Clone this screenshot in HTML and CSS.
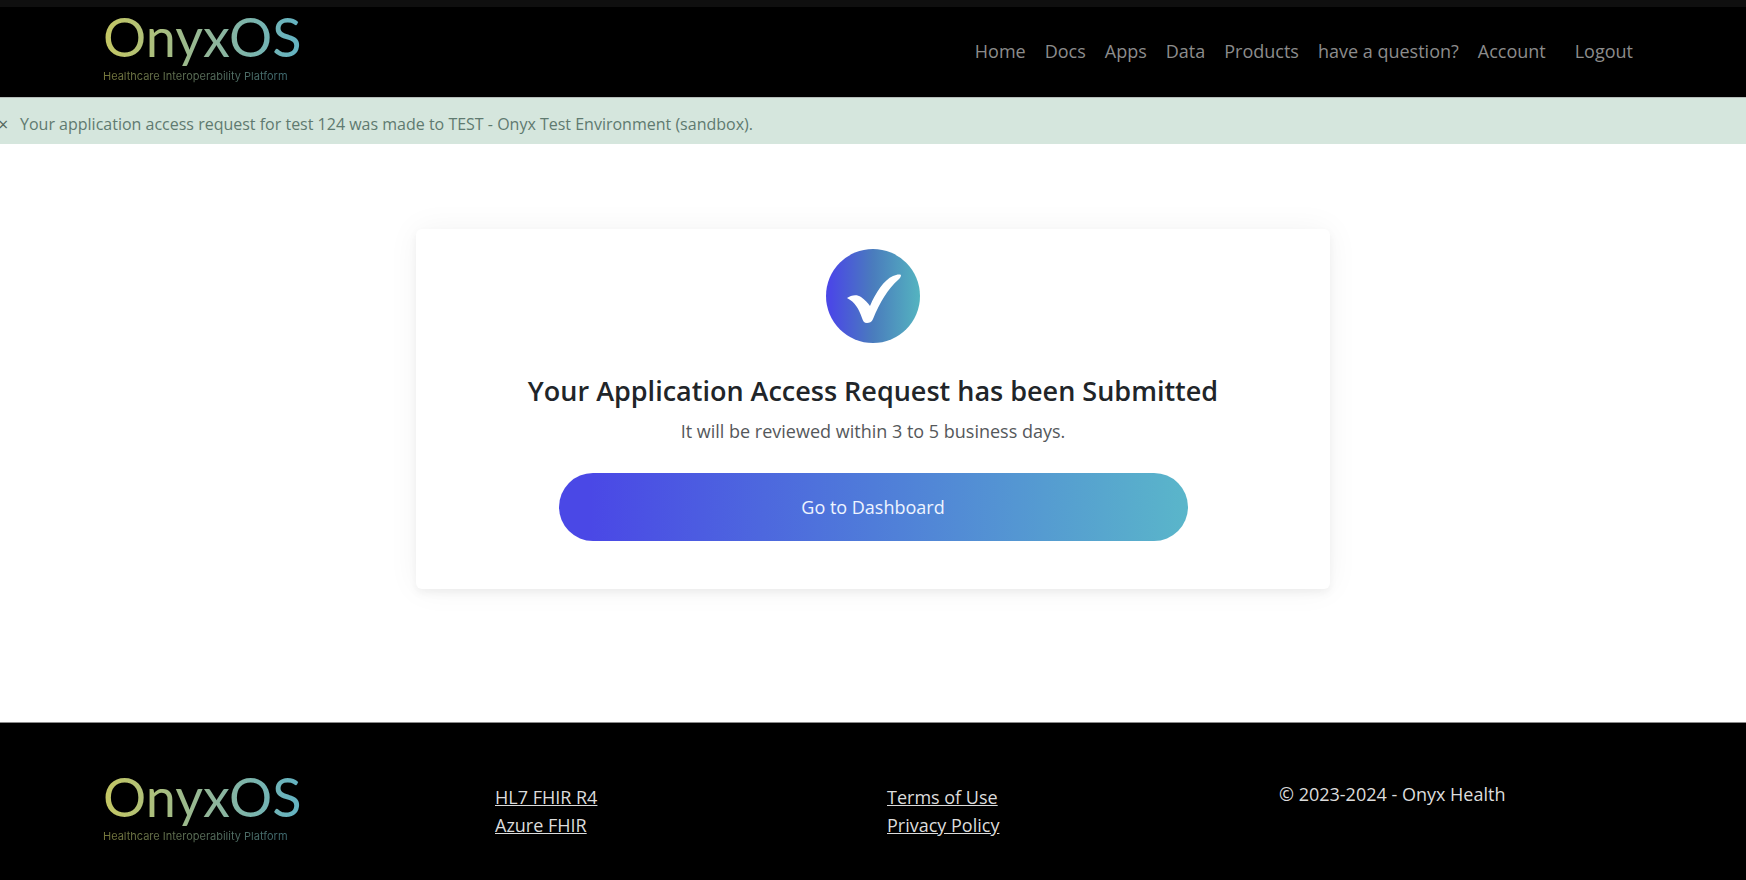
FILE: index.html
```html
<!DOCTYPE html>
<html lang="en">
<head>
    <meta charset="UTF-8">
    <meta name="viewport" content="width=device-width, initial-scale=1.0">
    <title>OnyxOS</title>
    <link rel="stylesheet" href="styles.css">
</head>
<body>
    <header class="header">
        <a href="#" class="logo">
            <span class="logo-name">OnyxOS</span>
            <span class="logo-tagline">Healthcare Interoperability Platform</span>
        </a>
        <nav class="nav">
            <a href="#">Home</a>
            <a href="#">Docs</a>
            <a href="#">Apps</a>
            <a href="#">Data</a>
            <a href="#">Products</a>
            <a href="#">have a question?</a>
            <a href="#">Account</a>
            <a href="#" class="nav-logout">Logout</a>
        </nav>
    </header>

    <div class="alert" role="alert">
        <button type="button" class="alert-close" aria-label="Close">×</button>
        <span>Your application access request for test 124 was made to TEST - Onyx Test Environment (sandbox).</span>
    </div>

    <main class="main">
        <div class="card">
            <svg class="check" viewBox="0 0 94 94" aria-hidden="true">
                <defs>
                    <linearGradient id="checkFill" x1="0" y1="0" x2="1" y2="0">
                        <stop offset="0.05" stop-color="#4a48e6"/>
                        <stop offset="0.5" stop-color="#4a7cbd"/>
                        <stop offset="1" stop-color="#54b4c0"/>
                    </linearGradient>
                </defs>
                <circle cx="47" cy="47" r="47" fill="url(#checkFill)"/>
                <path fill="#fff" d="M21 49C25 46 31 45 35 48C39 51 42 54 44 57C50 43 58 31 67 27C70 26 73 25 75 26C75 28 74 29 72 31C62 40 54 53 47 70C46 73 43 74 41 74C38 74 37 72 36 69C33 60 29 53 21 49Z"/>
            </svg>
            <h1>Your Application Access Request has been Submitted</h1>
            <p>It will be reviewed within 3 to 5 business days.</p>
            <button type="button" class="btn">Go to Dashboard</button>
        </div>
    </main>

    <footer class="footer">
        <div class="footer-col">
            <a href="#" class="logo">
                <span class="logo-name">OnyxOS</span>
                <span class="logo-tagline">Healthcare Interoperability Platform</span>
            </a>
        </div>
        <div class="footer-col footer-links">
            <a href="#">HL7 FHIR R4</a>
            <a href="#">Azure FHIR</a>
        </div>
        <div class="footer-col footer-links">
            <a href="#">Terms of Use</a>
            <a href="#">Privacy Policy</a>
        </div>
        <div class="footer-col footer-copy">© 2023-2024 - Onyx Health</div>
    </footer>
</body>
</html>
```
FILE: styles.css
```css
* {
    box-sizing: border-box;
}
body {
    display: flex;
    flex-direction: column;
    min-height: 100vh;
    margin: 0;
    background-color: #fff;
    color: #212529;
    font-family: "Open Sans", "Noto Sans", sans-serif;
    font-size: 18px;
    line-height: 28px;
}
button {
    font-family: inherit;
    border: none;
    cursor: pointer;
}
.header {
    display: flex;
    justify-content: space-between;
    align-items: flex-start;
    height: 97px;
    padding: 0 113px 0 103px;
    background-color: #000;
    border-top: 7px solid #0f0f0f;
}
.logo {
    display: inline-flex;
    flex-direction: column;
    text-decoration: none;
}
.logo-name,
.logo-tagline {
    background-image: linear-gradient(90deg, #c5c763, #8fb59a 55%, #62b3c4);
    -webkit-background-clip: text;
    background-clip: text;
    color: transparent;
}
.logo-name {
    font-family: Lato, sans-serif;
    font-size: 54px;
    line-height: 60px;
}
.logo-tagline {
    font-family: Inter, sans-serif;
    font-size: 11px;
    line-height: 18px;
    opacity: 0.6;
}
.nav {
    display: flex;
    gap: 19px;
    padding-top: 30px;
}
.nav a {
    color: #8c8c8c;
    text-decoration: none;
}
.nav-logout {
    margin-left: 10px;
}
.alert {
    display: flex;
    align-items: center;
    gap: 14px;
    height: 47px;
    padding-top: 6px;
    background-color: #d5e6dd;
    border-top: 1px solid #b5bcb9;
    color: #5f7a70;
    font-size: 16px;
}
.alert-close {
    width: 8px;
    margin-left: -2px;
    padding: 0;
    background: none;
    color: #52665e;
    font-size: 18px;
    line-height: 20px;
}
.main {
    flex: 1;
    padding: 85px 16px 0;
}
.card {
    display: flex;
    flex-direction: column;
    align-items: center;
    max-width: 914px;
    margin: 0 auto;
    padding: 20px 16px 48px;
    background-color: #fff;
    border-radius: 6px;
    box-shadow: 0 4px 8px rgba(0,0,0,0.05), 0 0 32px rgba(0,0,0,0.05);
    text-align: center;
}
.check {
    width: 94px;
    height: 94px;
}
.card h1 {
    margin: 30px 0 0;
    font-size: 27px;
    font-weight: 600;
    line-height: 36px;
}
.card p {
    margin: 8px 0 28px;
    color: #55585b;
}
.btn {
    width: 100%;
    max-width: 629px;
    height: 68px;
    border-radius: 34px;
    background-image: linear-gradient(90deg, #4a48e6 5%, #4f7cd9 50%, #5ab6ca);
    color: #eef4ff;
    font-size: 18px;
}
.footer {
    display: grid;
    grid-template-columns: repeat(4, 1fr);
    min-height: 158px;
    padding: 44px 75px 0 103px;
    background-color: #000;
    border-top: 1px solid #8a8a8a;
    color: #dcdcdc;
}
.footer-links {
    display: flex;
    flex-direction: column;
    align-items: flex-start;
    padding-top: 16px;
}
.footer-links a {
    color: #dcdcdc;
}
.footer-copy {
    padding-top: 13px;
}
```
